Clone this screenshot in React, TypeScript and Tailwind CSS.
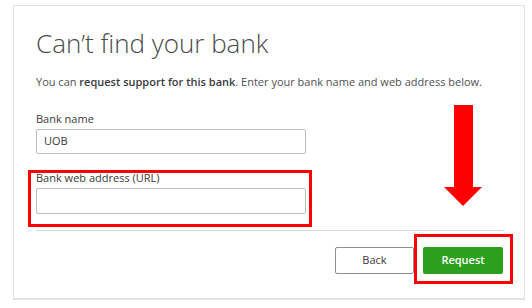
export default function App() {
  return (
    <div className="w-[532px] h-[308px] bg-white pt-[5px] pl-[13px] font-['Open_Sans',sans-serif] text-[#393a3d]">
      <div className="relative flex h-[295px] w-[512px] flex-col border border-b-2 border-[#e3e3e3] bg-white pl-[22px] pr-[21px]">
        {/* Title */}
        <h1 className="mt-[22px] text-[26px] font-light leading-[30px] text-[#4a4a4a]">
          Can’t find your bank
        </h1>
        <p className="mt-[17px] text-[11px] leading-[14px] text-[#505155]">
          You can <span className="font-semibold text-[#393a3d]">request support for this bank</span>. Enter your bank
          name and web address below.
        </p>

        {/* Bank name */}
        <div className="mt-[23px] flex w-[270px] flex-col">
          <label className="text-[11px] leading-[14px]">Bank name</label>
          <div className="mt-[3px] flex h-[25px] items-center rounded-[2px] border border-[#babec5] px-[7px] text-[11px]">
            UOB
          </div>
        </div>

        {/* URL, outlined */}
        <div className="mt-[16px] -ml-[8px] flex w-[284px] flex-col border-[3px] border-[#ff0000] pl-[5px] pr-[3px] pb-[10px]">
          <label className="text-[11px] leading-[10px]">Bank web address (URL)</label>
          <div className="mt-[5px] h-[26px] rounded-[2px] border border-[#babec5]" />
        </div>

        <div className="mt-[3px] h-px bg-[#d4d7dc]" />

        {/* Footer */}
        <div className="mt-[3px] -mr-[10px] flex justify-end">
          <button className="mt-[13px] h-[27px] w-[79px] rounded-[2px] border border-[#8d9096] text-[11px] text-[#393a3d]">
            Back
          </button>
          <div className="flex h-[50px] w-[99px] items-start border-[3px] border-[#ff0000] pl-[6px] pt-[10px]">
            <button className="h-[27px] w-[80px] rounded-[2px] bg-[#2ca01c] text-[11px] font-semibold text-white">
              Request
            </button>
          </div>
        </div>

        {/* Annotation arrow */}
        <svg className="absolute left-[430px] top-[99px]" width="38" height="102" viewBox="0 0 38 102">
          <path d="M10 0 H29 V82 H38 L19 101 L0 82 H10 Z" fill="#ff0000" />
        </svg>
      </div>
    </div>
  );
}
